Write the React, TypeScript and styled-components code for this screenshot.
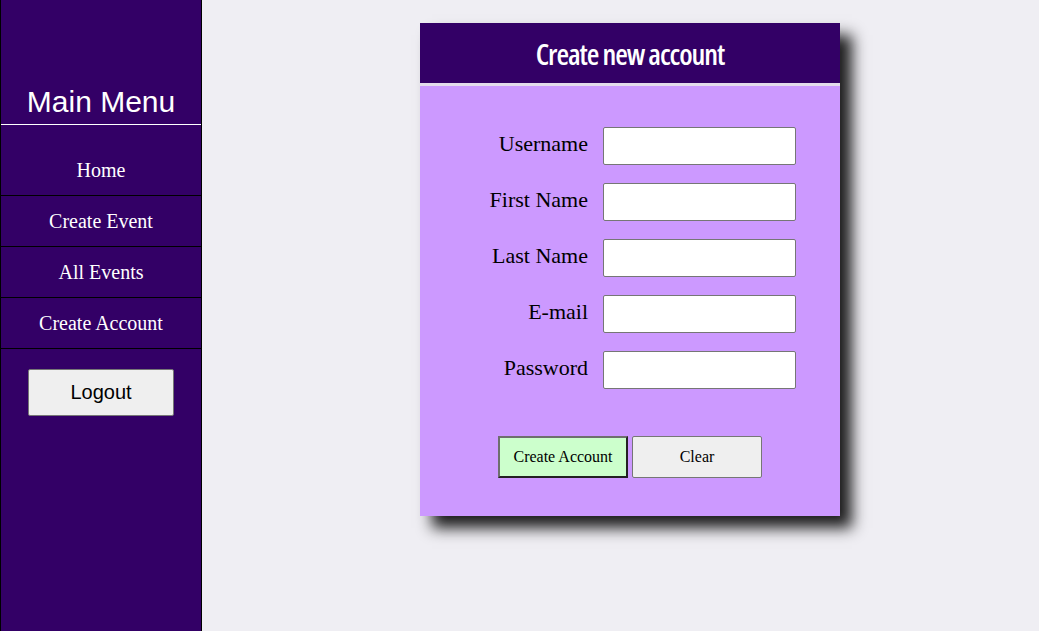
import React from "react";
import styled, { createGlobalStyle } from "styled-components";

const Global = createGlobalStyle`
  html, body { margin: 0; padding: 0; }
  body {
    background: #efeef3;
    font-family: "Liberation Serif", "Times New Roman", serif;
  }
`;

const Page = styled.div`
  display: flex;
  min-height: 631px;
`;

const Sidebar = styled.nav`
  width: 200px;
  flex: none;
  background: #330066;
  border-left: 1px solid #000;
  border-right: 1px solid #000;
  display: flex;
  flex-direction: column;
  align-items: stretch;
`;

const MenuTitle = styled.h1`
  margin: 0;
  padding: 85px 0 5px;
  font-family: "Liberation Sans", Arial, sans-serif;
  font-weight: normal;
  font-size: 30px;
  line-height: 34px;
  color: #fff;
  text-align: center;
  border-bottom: 1px solid #fff;
`;

const MenuList = styled.ul`
  list-style: none;
  margin: 20px 0 0;
  padding: 0;
`;

const MenuItem = styled.li`
  height: 50px;
  border-bottom: 1px solid #000;
  display: flex;
  align-items: center;
  justify-content: center;
  color: #fff;
  font-size: 20px;
  font-family: "Liberation Serif", "Times New Roman", serif;
`;

const LogoutButton = styled.button`
  align-self: center;
  margin-top: 20px;
  width: 146px;
  height: 47px;
  background: #efefef;
  border: 1px solid #767676;
  border-radius: 2px;
  font-family: "Liberation Sans", Arial, sans-serif;
  font-size: 20px;
  color: #000;
`;

const Main = styled.main`
  flex: 1;
  padding: 23px 0 0 19px;
  display: flex;
  justify-content: center;
  align-items: flex-start;
`;

const Card = styled.section`
  width: 420px;
  box-shadow: 12px 12px 14px rgba(0, 0, 0, 0.88);
`;

const CardHeader = styled.header`
  height: 60px;
  background: #330066;
  border-bottom: 3px solid #e4dcec;
  display: flex;
  align-items: center;
  justify-content: center;
`;

const CardTitle = styled.h2`
  margin: 0;
  color: #fff;
  font-family: "Open Sans", "Noto Sans", sans-serif;
  font-stretch: 75%;
  font-weight: 600;
  font-size: 29px;
  letter-spacing: -1.1px;
`;

const CardBody = styled.div`
  background: #cc99ff;
  padding: 41px 44px 38px 0;
`;

const FormGrid = styled.div`
  display: grid;
  grid-template-columns: 1fr 193px;
  column-gap: 15px;
  row-gap: 18px;
  align-items: center;
`;

const Label = styled.label`
  text-align: right;
  font-size: 22px;
  color: #000;
  font-family: "Liberation Serif", "Times New Roman", serif;
  margin-top: -5px;
`;

const Input = styled.input`
  box-sizing: border-box;
  width: 193px;
  height: 38px;
  background: #fff;
  border: 1px solid #767676;
  border-radius: 2px;
  margin: 0;
`;

const Actions = styled.div`
  display: flex;
  justify-content: center;
  gap: 4px;
  margin-top: 47px;
  padding-left: 44px;
`;

const Button = styled.button<{ $primary?: boolean }>`
  box-sizing: border-box;
  width: 130px;
  height: 42px;
  font-family: "Liberation Serif", "Times New Roman", serif;
  font-size: 16px;
  color: #000;
  background: ${(p) => (p.$primary ? "#ccffcc" : "#efefef")};
  border: ${(p) => (p.$primary ? "2px solid" : "1px solid #767676")};
  border-color: ${(p) => (p.$primary ? "#6e6e6e #222 #222 #6e6e6e" : "#767676")};
  border-radius: ${(p) => (p.$primary ? "0" : "2px")};
`;

const fields = ["Username", "First Name", "Last Name", "E-mail", "Password"];

export default function App() {
  return (
    <>
      <Global />
      <Page>
        <Sidebar>
          <MenuTitle>Main Menu</MenuTitle>
          <MenuList>
            <MenuItem>Home</MenuItem>
            <MenuItem>Create Event</MenuItem>
            <MenuItem>All Events</MenuItem>
            <MenuItem>Create Account</MenuItem>
          </MenuList>
          <LogoutButton>Logout</LogoutButton>
        </Sidebar>
        <Main>
          <Card>
            <CardHeader>
              <CardTitle>Create new account</CardTitle>
            </CardHeader>
            <CardBody>
              <FormGrid>
                {fields.map((f) => (
                  <React.Fragment key={f}>
                    <Label>{f}</Label>
                    <Input type={f === "Password" ? "password" : "text"} />
                  </React.Fragment>
                ))}
              </FormGrid>
              <Actions>
                <Button $primary>Create Account</Button>
                <Button>Clear</Button>
              </Actions>
            </CardBody>
          </Card>
        </Main>
      </Page>
    </>
  );
}
